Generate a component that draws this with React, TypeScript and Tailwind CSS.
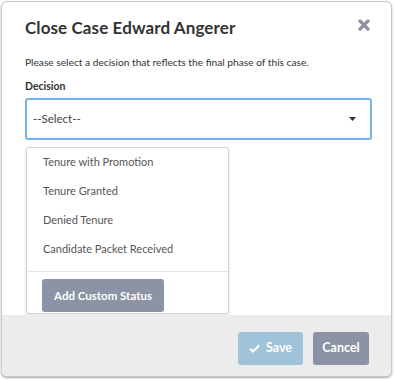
import React from "react";

export default function App() {
  const items = [
    "Tenure with Promotion",
    "Tenure Granted",
    "Denied Tenure",
    "Candidate Packet Received",
  ];
  return (
    <div className="w-[394px] h-[379px] bg-white p-[1px] pr-[2px] pb-[2px]" style={{ fontFamily: "Lato, 'Open Sans', sans-serif" }}>
      <div className="w-[391px] h-[376px] rounded-[6px] border border-[#c8c8c8] shadow-[0_1px_2px_rgba(0,0,0,0.35)] overflow-hidden flex flex-col bg-white">
        <div className="flex-1 px-[23px] pt-[12px]">
          <div className="flex items-start justify-between">
            <h1 className="text-[17px] font-bold text-[#333] leading-[28px] tracking-[0.1px]">
              Close Case Edward Angerer
            </h1>
            <svg width="12" height="12" viewBox="0 0 12 12" className="mt-[5px] mr-[-2px]">
              <path d="M2 2 L10 10 M10 2 L2 10" stroke="#8d919b" strokeWidth="3.2" strokeLinecap="round" />
            </svg>
          </div>
          <p className="mt-[12px] text-[10.2px] text-[#333] leading-[16px]">
            Please select a decision that reflects the final phase of this case.
          </p>
          <div className="mt-[8px] text-[10.5px] font-bold text-[#333] leading-[16px]">Decision</div>
          <div className="mt-[4px] h-[42px] w-[347px] rounded-[3px] border-2 border-[#72b3ea] flex items-center justify-between pl-[6px] pr-[14px]">
            <span className="text-[11.5px] text-[#444]">--Select--</span>
            <svg width="7" height="4" viewBox="0 0 7 4">
              <path d="M0 0 L7 0 L3.5 4 Z" fill="#333" />
            </svg>
          </div>
          <div className="mt-[7px] ml-[1px] w-[203px] h-[167px] rounded-[3px] border border-[#d6d6d6] shadow-[0_1px_3px_rgba(0,0,0,0.15)] bg-white flex flex-col">
            <div className="flex flex-col">
              {items.map((t) => (
                <div key={t} className="h-[29px] flex items-center pl-[16px] text-[11px] text-[#555]">
                  {t}
                </div>
              ))}
            </div>
            <div className="mt-[7px] border-t border-[#e5e5e5]" />
            <div className="pl-[15px] pt-[7px]">
              <div className="w-[122px] h-[33px] rounded-[3px] bg-[#8b93a4] flex items-center justify-center text-white text-[11.5px] font-bold">
                Add Custom Status
              </div>
            </div>
          </div>
        </div>
        <div className="h-[61px] bg-[#ececec] flex items-center justify-end gap-[10px] pr-[22px] pt-[6px]">
          <div className="w-[65px] h-[33px] rounded-[3px] bg-[#9fc4d9] flex items-center justify-center gap-[6px] text-white text-[12.5px] font-bold">
            <svg width="11" height="9" viewBox="0 0 11 9">
              <path d="M1 4.8 L4 7.5 L10 1.5" stroke="#fff" strokeWidth="2.2" fill="none" />
            </svg>
            Save
          </div>
          <div className="w-[56px] h-[33px] rounded-[3px] bg-[#8b93a4] flex items-center justify-center text-white text-[12.5px] font-bold">
            Cancel
          </div>
        </div>
      </div>
    </div>
  );
}
